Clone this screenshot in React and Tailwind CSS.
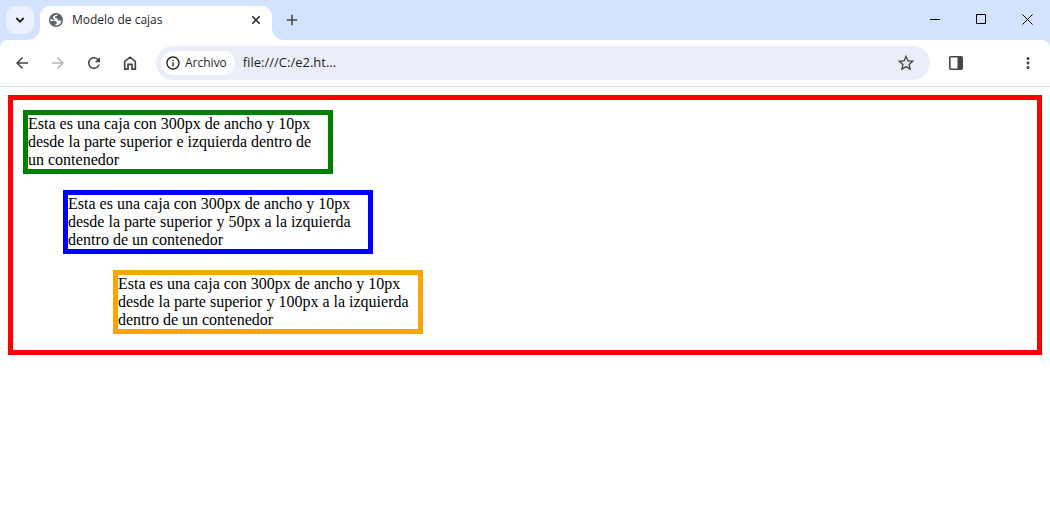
import React from "react";
import { MdArrowBack, MdArrowForward, MdRefresh, MdStarBorder, MdMoreVert, MdInfoOutline } from "react-icons/md";

const boxes = [
  {
    id: "verde",
    className: "border-[#008000]",
    text: "Esta es una caja con 300px de ancho y 10px desde la parte superior e izquierda dentro de un contenedor",
  },
  {
    id: "azul",
    className: "ml-10 border-[#0000ff]",
    text: "Esta es una caja con 300px de ancho y 10px desde la parte superior y 50px a la izquierda dentro de un contenedor",
  },
  {
    id: "naranja",
    className: "ml-[90px] border-[#ffa500]",
    text: "Esta es una caja con 300px de ancho y 10px desde la parte superior y 100px a la izquierda dentro de un contenedor",
  },
];

function WindowButton({ label, children }) {
  return (
    <button type="button" aria-label={label} className="flex h-full w-[46px] items-center justify-center text-black">
      <svg width="11" height="11" viewBox="0 0 11 11" fill="none" stroke="currentColor" className="block" aria-hidden="true">
        {children}
      </svg>
    </button>
  );
}

function ToolButton({ label, className = "text-[#444746]", children }) {
  return (
    <button type="button" aria-label={label} className={`flex size-8 shrink-0 items-center justify-center rounded-full ${className}`}>
      {children}
    </button>
  );
}

function TabStrip() {
  return (
    <header className="flex h-10 items-start bg-[#d3e3fd]">
      <button type="button" aria-label="Buscar pestañas" className="ml-1.5 mt-1.5 flex size-7 items-center justify-center rounded-[10px] bg-[#ebf1fe]">
        <svg width="10" height="8" viewBox="0 0 10 8" fill="none" stroke="#1f1f1f" strokeWidth="1.8" aria-hidden="true">
          <path d="M1.3 2 5 5.7 8.7 2" />
        </svg>
      </button>
      <div className="relative ml-1.5 mt-1.5 flex h-[34px] w-[232px] rounded-t-[10px] bg-white pl-2 pr-2">
        <svg className="absolute -left-3 bottom-0" width="12" height="12" viewBox="0 0 12 12" fill="#fff" aria-hidden="true">
          <path d="M12 0A12 12 0 0 1 0 12h12z" />
        </svg>
        <svg className="absolute -right-3 bottom-0" width="12" height="12" viewBox="0 0 12 12" fill="#fff" aria-hidden="true">
          <path d="M0 0a12 12 0 0 0 12 12H0z" />
        </svg>
        <div className="flex h-7 flex-1 items-center">
          <svg width="16" height="16" viewBox="0 0 16 16" aria-hidden="true">
            <circle cx="8" cy="8" r="7" fill="#5f6368" />
            <path fill="#fff" d="M9.6 2.6C9.5 3.7 8.900 4 8 4.200 7 4.400 6.800 4.800 6.900 5.600 7 6.200 7.500 6.300 8.300 6.300c1.200 0 1.500.6 1.500 1.500 0 .7.400 1 1.100.8.800-.2 1.600-.3 2.500-.1A5.500 5.500 0 0 1 7.300 13.500c.1-.8 0-1.400.9-1.700.8-.3.900-1.100.4-1.800-.5-.8-1.300-1.100-2.300-1.100H2.600A5.500 5.500 0 0 1 2.700 6.500L5 8.300c.9.2 1.300-.1 1.400-.8L5 6.200C4.700 4.500 6.200 2.800 9.600 2.600z" />
          </svg>
          <span className="ml-2 flex-1 text-xs text-[#1f1f1f]">Modelo de cajas</span>
          <button type="button" aria-label="Cerrar pestaña" className="flex size-4 items-center justify-center">
            <svg width="10" height="10" viewBox="0 0 10 10" fill="none" stroke="#1f1f1f" strokeWidth="1.5" aria-hidden="true">
              <path d="m1.3 1.3 7.4 7.4m0-7.4L1.3 8.7" />
            </svg>
          </button>
        </div>
      </div>
      <button type="button" aria-label="Nueva pestaña" className="ml-1.5 mt-1.5 flex size-7 items-center justify-center">
        <svg width="12" height="12" viewBox="0 0 12 12" fill="none" stroke="#474747" strokeWidth="1.6" aria-hidden="true">
          <path d="M6 .8v10.4M.8 6h10.4" />
        </svg>
      </button>
      <div className="ml-auto flex h-[39px]">
        <WindowButton label="Minimizar"><path d="M0 5.5h10" /></WindowButton>
        <WindowButton label="Maximizar"><path d="M.5.5h9v9h-9z" /></WindowButton>
        <WindowButton label="Cerrar"><path d="m.5.5 10 10m0-10-10 10" /></WindowButton>
      </div>
    </header>
  );
}

function Toolbar() {
  return (
    <div className="bg-[#d3e3fd]">
      <nav aria-label="Navegación" className="flex h-[47px] items-center rounded-t-lg border-b border-[#e1e3e1] bg-white pl-1.5 pr-1.5">
        <div className="flex gap-1">
          <ToolButton label="Atrás"><MdArrowBack size={18} /></ToolButton>
          <ToolButton label="Adelante" className="text-[#b4b5b5]"><MdArrowForward size={18} /></ToolButton>
          <ToolButton label="Recargar"><MdRefresh size={18} /></ToolButton>
          <ToolButton label="Inicio">
            <svg width="14" height="16" viewBox="0 0 14 16" fill="none" stroke="currentColor" strokeWidth="1.7" aria-hidden="true">
              <path d="M1.7 6.3 7 2.2l5.3 4.1v7.9H9V9.300H5v4.900H1.700z" />
            </svg>
          </ToolButton>
        </div>
        <div className="ml-2.5 flex h-[34px] min-w-0 flex-1 items-center rounded-full bg-[#ebeef8] pl-[5px] pr-2">
          <button type="button" className="flex h-6 shrink-0 items-center gap-1 rounded-full bg-white pl-1 pr-2 text-xs font-medium text-[#1f1f1f]">
            <MdInfoOutline size={16} aria-hidden="true" />
            Archivo
          </button>
          <input
            type="text"
            aria-label="Dirección"
            defaultValue="file:///C:/e2.ht..."
            className="ml-2 min-w-0 flex-1 bg-transparent text-[13px] text-[#1f1f1f] outline-none"
          />
          <ToolButton label="Añadir a marcadores"><MdStarBorder size={20} /></ToolButton>
        </div>
        <div className="ml-2.5 flex gap-10">
          <ToolButton label="Panel lateral">
            <svg width="14" height="14" viewBox="0 0 14 14" aria-hidden="true">
              <rect x=".8" y=".8" width="12.4" height="12.4" rx="1" fill="none" stroke="currentColor" strokeWidth="1.6" />
              <path d="M8.5 1h4.7v12H8.5z" fill="currentColor" />
            </svg>
          </ToolButton>
          <ToolButton label="Más opciones"><MdMoreVert size={18} /></ToolButton>
        </div>
      </nav>
    </div>
  );
}

export default function App() {
  return (
    <div className="min-h-screen bg-white font-['Open_Sans','Noto_Sans',sans-serif]">
      <TabStrip />
      <Toolbar />
      <main className="m-2 flex flex-col gap-4 border-[5px] border-[#ff0000] px-2.5 pb-4 pt-2.5 font-['Liberation_Serif',serif] text-base leading-[18px] text-black">
        {boxes.map((box) => (
          <p key={box.id} className={`box-content w-[300px] border-[5px] ${box.className}`}>
            {box.text}
          </p>
        ))}
      </main>
    </div>
  );
}
